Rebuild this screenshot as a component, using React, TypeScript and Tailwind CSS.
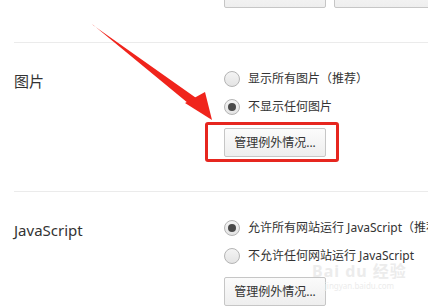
import { ReactNode } from "react";

const font = { fontFamily: '"Noto Sans", "Noto Sans CJK SC", sans-serif' };

function Radio({ checked, children }: { checked?: boolean; children: ReactNode }) {
  return (
    <div className="flex items-center h-[28px] gap-[8px] whitespace-nowrap">
      <span className="w-[16px] h-[16px] shrink-0 rounded-full border border-[#b4b4b4] bg-gradient-to-b from-[#f4f4f4] to-[#e4e4e4] flex items-center justify-center">
        {checked && <span className="w-[8px] h-[8px] rounded-full bg-[#4a4a4a]" />}
      </span>
      <span className="text-[12px] text-[#333]">{children}</span>
    </div>
  );
}

function ExceptionButton({ children = "管理例外情况..." }: { children?: ReactNode }) {
  return (
    <button className="w-[102px] h-[29px] shrink-0 rounded-[2px] border border-[#c6c6c6] bg-gradient-to-b from-[#fbfbfb] to-[#eeeeee] text-[12px] text-[#333]">
      {children}
    </button>
  );
}

function Section({ label, children }: { label: string; children: ReactNode }) {
  return (
    <div className="ml-[14px] border-t border-[#ebebeb] flex pt-[22px]">
      <div className="w-[210px] shrink-0 text-[15px] text-[#333] pt-[5px]">{label}</div>
      <div className="flex flex-col">{children}</div>
    </div>
  );
}

export default function App() {
  return (
    <div className="relative w-[428px] h-[306px] overflow-hidden bg-white" style={font}>
      {/* buttons from the section above, cut off */}
      <div className="flex gap-[8px] pl-[224px] mt-[-21px] h-[63px]">
        <ExceptionButton>管理例外情况...</ExceptionButton>
        <button className="w-[110px] h-[29px] shrink-0 rounded-[2px] border border-[#c6c6c6] bg-gradient-to-b from-[#fbfbfb] to-[#eeeeee]" />
      </div>

      <Section label="图片">
        <Radio>显示所有图片（推荐）</Radio>
        <Radio checked>不显示任何图片</Radio>
        <div className="relative mt-[7px] mb-[34px] w-[102px]">
          <ExceptionButton />
          <div className="absolute left-[-19px] right-[-13px] top-[-6px] bottom-[-5px] border-[3px] border-[#e6261f] rounded-[3px]" />
        </div>
      </Section>

      <Section label="JavaScript">
        <Radio checked>允许所有网站运行 JavaScript（推荐）</Radio>
        <Radio>不允许任何网站运行 JavaScript</Radio>
        <div className="mt-[7px]">
          <ExceptionButton />
        </div>
      </Section>

      {/* watermark */}
      <div className="absolute left-[312px] top-[263px] flex flex-col items-center text-[#ececec] leading-none pointer-events-none">
        <span className="text-[16px] font-bold tracking-[1px]">Bai du 经验</span>
        <span className="text-[8px] mt-[3px]">jingyan.baidu.com</span>
      </div>

      {/* red arrow */}
      <svg className="absolute left-0 top-0" width="428" height="306" viewBox="0 0 428 306">
        <polygon points="92,24 93.5,25.5 199,100 194,108" fill="#f0241c" />
        <polygon points="185,103 212,120 205,92" fill="#f0241c" />
      </svg>
    </div>
  );
}
